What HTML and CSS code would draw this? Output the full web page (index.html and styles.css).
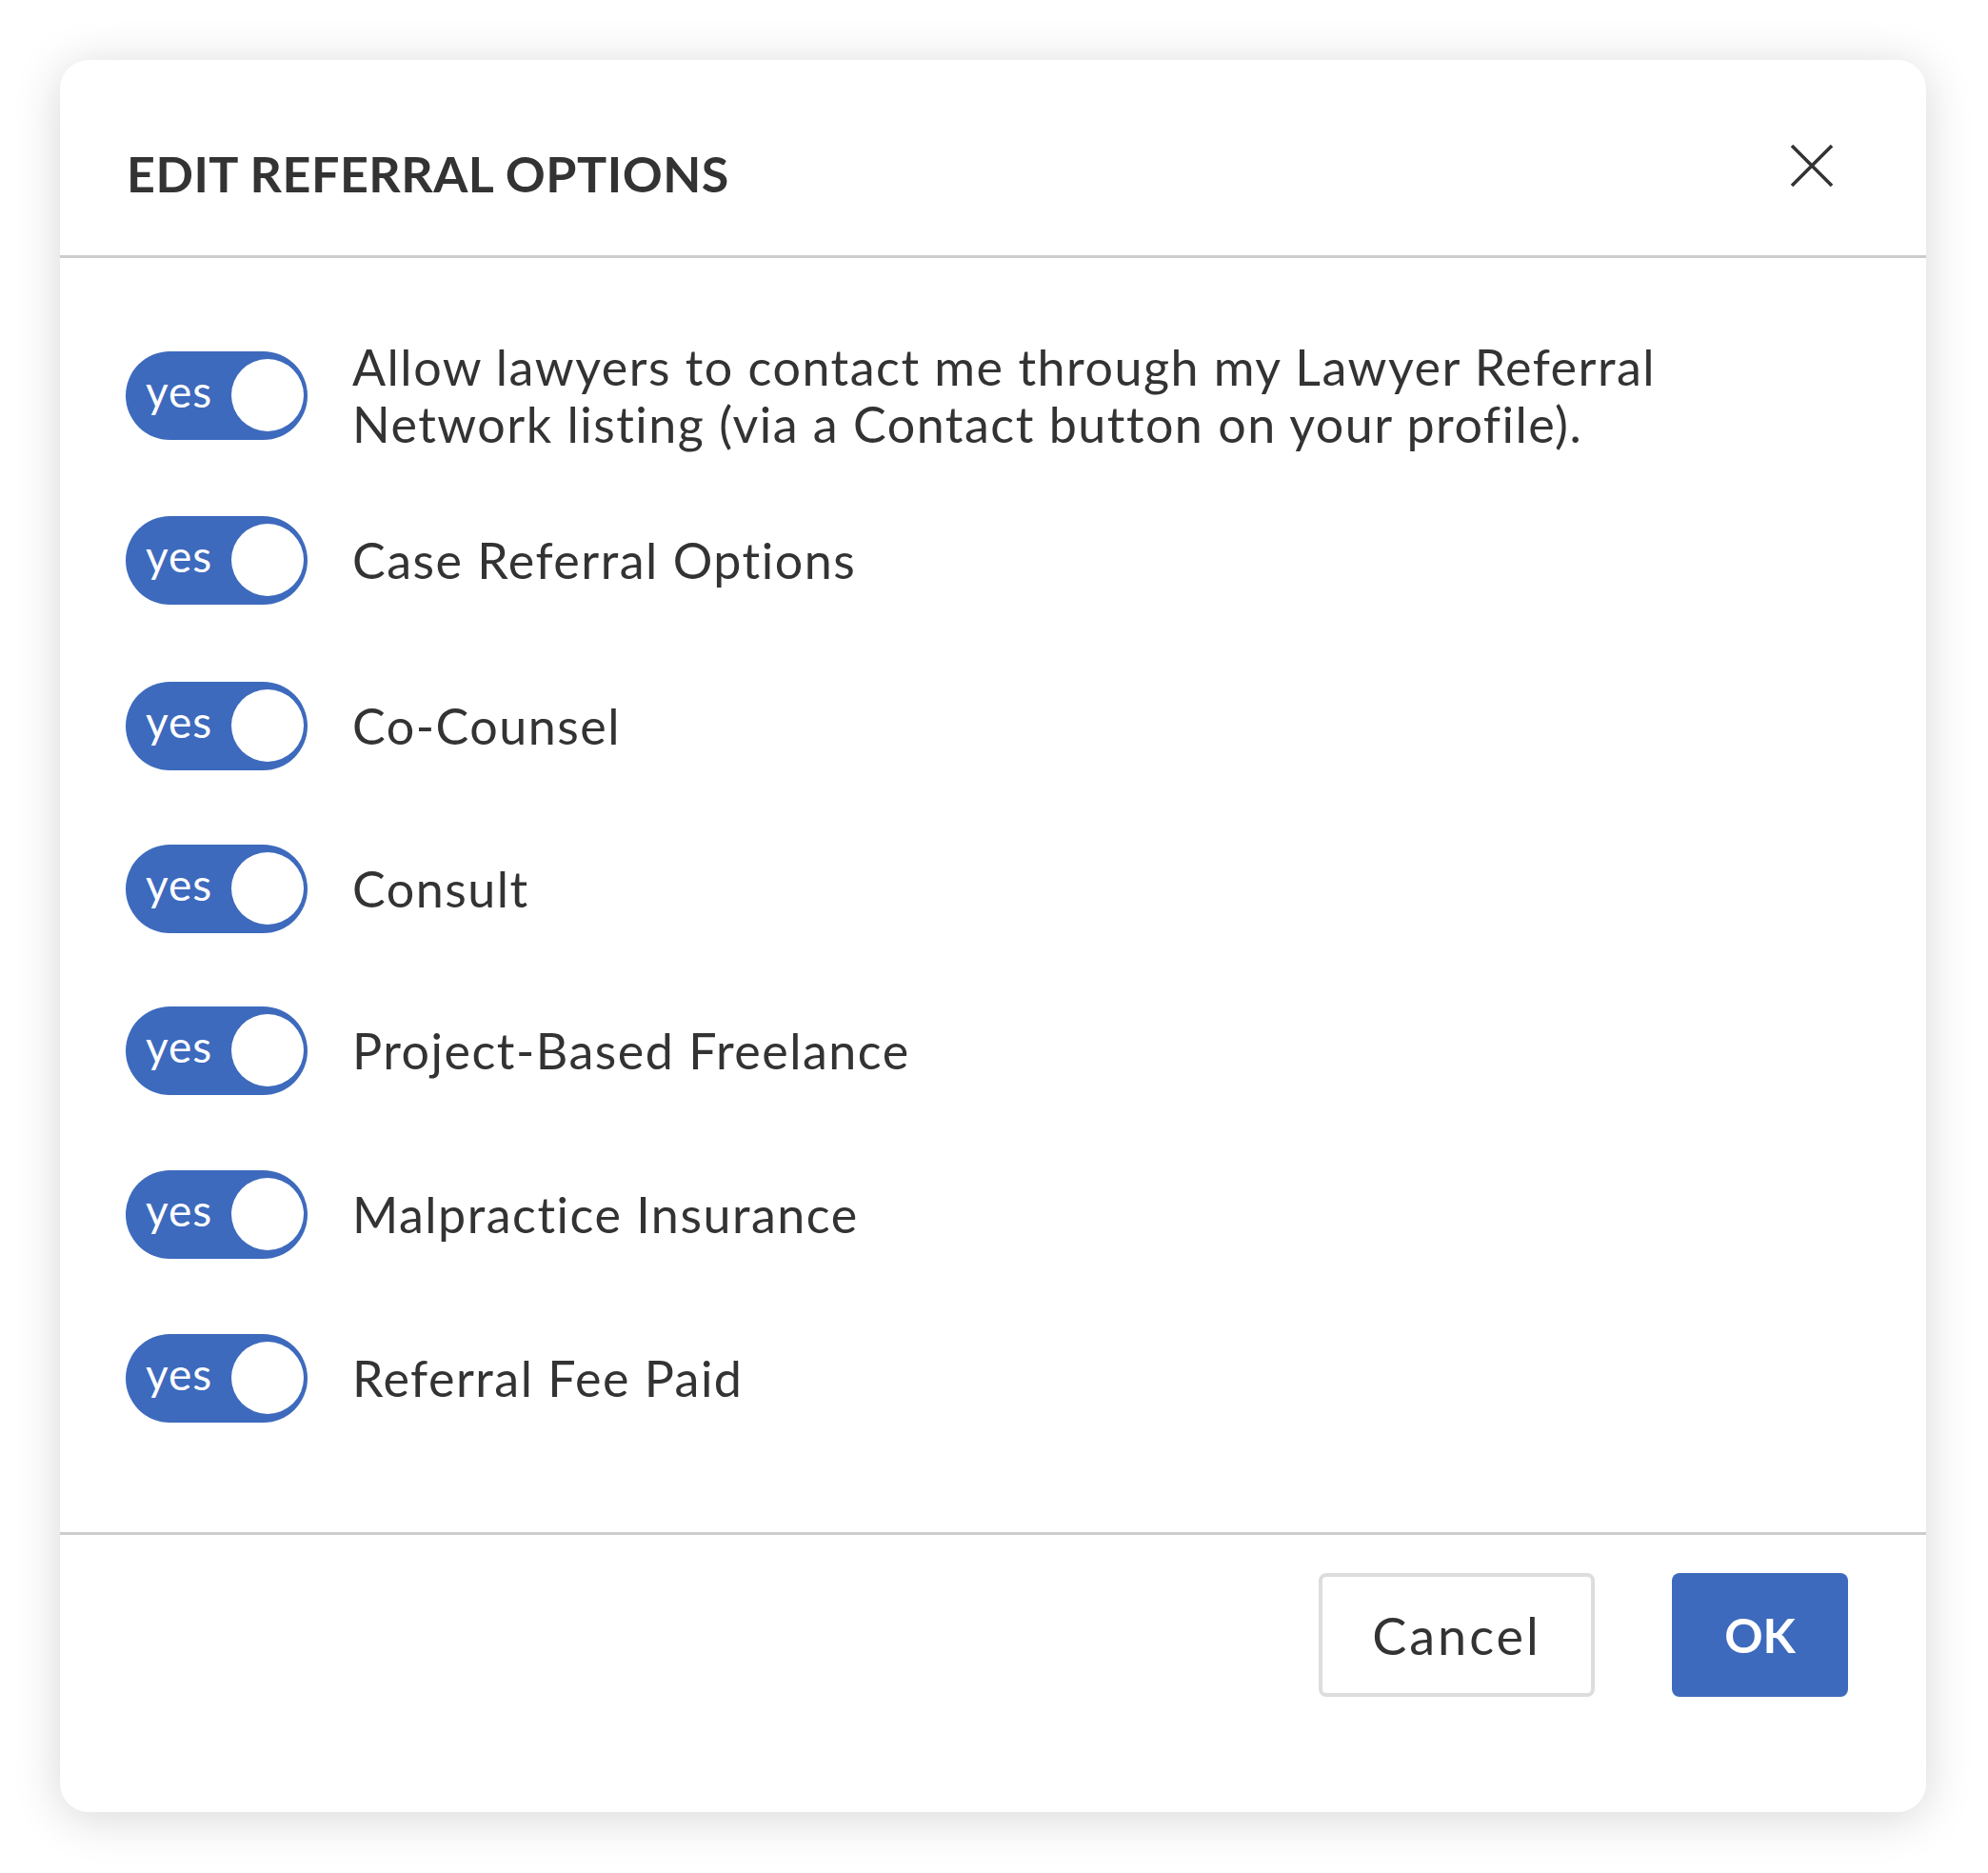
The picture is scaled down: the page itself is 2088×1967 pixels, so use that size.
FILE: index.html
```html
<!DOCTYPE html>
<html lang="en">
<head>
<meta charset="utf-8">
<title>Edit Referral Options</title>
<link rel="stylesheet" href="styles.css">
</head>
<body>
<div class="dialog">
  <div class="header">
    <h1 class="title">EDIT REFERRAL OPTIONS</h1>
    <svg class="close" width="48" height="46" viewBox="0 0 48 46" aria-label="Close">
      <path d="M3 2 L45 44 M45 2 L3 44" stroke="#333" stroke-width="3.6" fill="none"/>
    </svg>
  </div>
  <div class="body">
    <div class="row">
      <div class="toggle"><span class="yes">yes</span><span class="knob"></span></div>
      <div class="label">Allow lawyers to contact me through my Lawyer Referral<br>Network listing (via a Contact button on your profile).</div>
    </div>
    <div class="row">
      <div class="toggle"><span class="yes">yes</span><span class="knob"></span></div>
      <div class="label">Case Referral Options</div>
    </div>
    <div class="row">
      <div class="toggle"><span class="yes">yes</span><span class="knob"></span></div>
      <div class="label">Co-Counsel</div>
    </div>
    <div class="row">
      <div class="toggle"><span class="yes">yes</span><span class="knob"></span></div>
      <div class="label">Consult</div>
    </div>
    <div class="row">
      <div class="toggle"><span class="yes">yes</span><span class="knob"></span></div>
      <div class="label">Project-Based Freelance</div>
    </div>
    <div class="row">
      <div class="toggle"><span class="yes">yes</span><span class="knob"></span></div>
      <div class="label">Malpractice Insurance</div>
    </div>
    <div class="row">
      <div class="toggle"><span class="yes">yes</span><span class="knob"></span></div>
      <div class="label">Referral Fee Paid</div>
    </div>
  </div>
  <div class="footer">
    <button class="btn cancel">Cancel</button>
    <button class="btn ok">OK</button>
  </div>
</div>
</body>
</html>
```

FILE: styles.css
```css
html, body {
  margin: 0;
  padding: 0;
  background: #ffffff;
}
body {
  padding: 63px;
  font-family: Lato, "Open Sans", "Liberation Sans", sans-serif;
  color: #333333;
}
.dialog {
  width: 1960px;
  background: #ffffff;
  border-radius: 30px;
  box-shadow: 0 6px 50px rgba(0, 0, 0, 0.16);
  overflow: hidden;
}
.header {
  display: flex;
  align-items: flex-start;
  justify-content: space-between;
  padding: 87px 96px 54px 70px;
  border-bottom: 3px solid #cdcdcd;
}
.title {
  margin: 0;
  font-size: 52px;
  line-height: 64px;
  font-weight: 700;
  letter-spacing: 0.5px;
  color: #333333;
}
.close {
  display: block;
  margin-top: 1px;
}
.body {
  padding: 58px 70px 76px 69px;
  border-bottom: 3px solid #cdcdcd;
}
.row {
  height: 172px;
  display: flex;
  align-items: center;
  gap: 47px;
}
.row:nth-child(2),
.row:nth-child(3) {
  height: 174px;
}
.row:nth-child(4) {
  height: 168px;
}
.toggle {
  flex: none;
  width: 191px;
  height: 93px;
  border-radius: 47px;
  background: #3d6abd;
  display: flex;
  align-items: center;
  justify-content: space-between;
  box-sizing: border-box;
  padding: 0 4px 0 21px;
}
.yes {
  color: #ffffff;
  font-size: 46px;
  letter-spacing: 1px;
  line-height: 1;
  margin-top: -8px;
}
.knob {
  width: 76px;
  height: 76px;
  border-radius: 50%;
  background: #ffffff;
}
.label {
  font-size: 52px;
  line-height: 60px;
  letter-spacing: 1.5px;
  color: #333333;
}
.footer {
  display: flex;
  justify-content: flex-end;
  gap: 81px;
  padding: 40px 82px 121px 0;
}
.btn {
  font-family: Lato, "Open Sans", "Liberation Sans", sans-serif;
  height: 130px;
  margin: 0;
  cursor: pointer;
}
.cancel {
  width: 290px;
  background: #ffffff;
  border: 4px solid #dddddd;
  border-radius: 8px;
  font-size: 54px;
  letter-spacing: 3px;
  color: #333333;
}
.ok {
  width: 185px;
  background: #3d6abd;
  border: none;
  border-radius: 8px;
  font-size: 50px;
  font-weight: 700;
  color: #ffffff;
}
```
